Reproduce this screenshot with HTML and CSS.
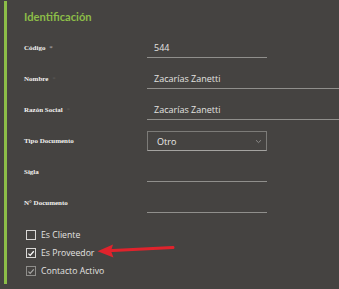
FILE: index.html
```html
<!DOCTYPE html>
<html lang="es">
<head>
    <meta charset="UTF-8">
    <meta name="viewport" content="width=device-width, initial-scale=1.0">
    <title>Identificación</title>
    <link rel="stylesheet" href="styles.css">
</head>
<body>
    <div class="panel">
        <h2 class="section-title">Identificación</h2>
        <div class="form-grid">
            <label class="field-label">Código <span class="req">*</span></label>
            <div class="field"><span class="field-value">544</span></div>

            <label class="field-label">Nombre <span class="req faint">*</span></label>
            <div class="field wide"><span class="field-value">Zacarías Zanetti</span></div>

            <label class="field-label">Razón Social <span class="req faint">*</span></label>
            <div class="field wide"><span class="field-value">Zacarías Zanetti</span></div>

            <label class="field-label">Tipo Documento</label>
            <div class="select">
                <span class="select-value">Otro</span>
                <svg class="caret" width="7" height="5" viewBox="0 0 7 5"><path d="M1 1.2 L3.5 3.6 L6 1.2" fill="none" stroke="#8a8987" stroke-width="1"/></svg>
            </div>

            <label class="field-label">Sigla</label>
            <div class="field"></div>

            <label class="field-label">N° Documento</label>
            <div class="field"></div>
        </div>

        <div class="checks">
            <div class="check-row">
                <span class="box"></span>
                <span class="check-label">Es Cliente</span>
            </div>
            <div class="check-row">
                <span class="box checked">
                    <svg width="9" height="9" viewBox="0 0 9 9"><path d="M1.6 4.6 L3.6 6.6 L7.6 2" fill="none" stroke="#ffffff" stroke-width="1.4"/></svg>
                </span>
                <span class="check-label">Es Proveedor</span>
            </div>
            <div class="check-row">
                <span class="box disabled">
                    <svg width="9" height="9" viewBox="0 0 9 9"><path d="M1.6 4.6 L3.6 6.6 L7.6 2" fill="none" stroke="#a9a8a6" stroke-width="1.3"/></svg>
                </span>
                <span class="check-label">Contacto Activo</span>
            </div>
        </div>
    </div>

    <svg class="arrow" width="84" height="20" viewBox="94 242 84 20">
        <line x1="173" y1="247.5" x2="108" y2="250.8" stroke="#e0232c" stroke-width="3" stroke-linecap="round"/>
        <polygon points="97.5,251.2 113,244.5 111,251 113.5,257.5" fill="#e0232c"/>
    </svg>
</body>
</html>
```

FILE: styles.css
```css
:root {
    --bg: #454341;
    --accent: #8cbd48;
    --text: #e6e5e3;
    --line: #908f8c;
}
html, body {
    margin: 0;
    padding: 0;
    overflow: hidden;
}
body {
    background-color: var(--bg);
    font-family: 'Open Sans', 'Noto Sans', sans-serif;
    color: var(--text);
    width: 339px;
    height: 289px;
    position: relative;
}
.panel {
    margin: 1px 0 0 4px;
    height: 283px;
    border-left: 3px solid var(--accent);
    padding: 9px 0 0 17px;
    box-sizing: border-box;
}
.section-title {
    margin: 0;
    font-family: Lato, 'Open Sans', sans-serif;
    font-size: 11.2px;
    line-height: 14px;
    font-weight: 700;
    color: var(--accent);
}
.form-grid {
    margin-top: 14px;
    display: grid;
    grid-template-columns: 123px 120px;
    grid-auto-rows: 20px;
    row-gap: 11px;
}
.field-label {
    align-self: center;
    font-family: 'Liberation Serif', serif;
    font-weight: 700;
    font-size: 7px;
    color: #f2f1ef;
}
.req {
    color: #b9b8b5;
    font-weight: 400;
    margin-left: 2px;
}
.req.faint {
    color: #5c5a58;
}
.field {
    border-bottom: 1px solid var(--line);
    display: flex;
    align-items: center;
    padding-left: 7px;
    box-sizing: border-box;
}
.field.wide {
    width: 200px;
}
.field-value {
    font-size: 9px;
    color: #e3e2e0;
}
.select {
    border: 1px solid #7c7b78;
    border-bottom-color: #a4a3a0;
    display: flex;
    align-items: center;
    justify-content: space-between;
    padding: 0 4px 0 9px;
    box-sizing: border-box;
}
.select-value {
    font-size: 9px;
    color: #ecebea;
}
.checks {
    margin-top: 13px;
    padding-left: 2px;
    display: flex;
    flex-direction: column;
}
.check-row {
    height: 18px;
    display: flex;
    align-items: center;
    gap: 5px;
}
.box {
    width: 10px;
    height: 10px;
    border: 1px solid #d9d8d6;
    box-sizing: border-box;
    display: flex;
    align-items: center;
    justify-content: center;
}
.box.disabled {
    border-color: #8f8e8b;
}
.check-label {
    font-size: 8.7px;
    color: #e3e2e0;
}
.arrow {
    position: absolute;
    left: 94px;
    top: 242px;
}
```
